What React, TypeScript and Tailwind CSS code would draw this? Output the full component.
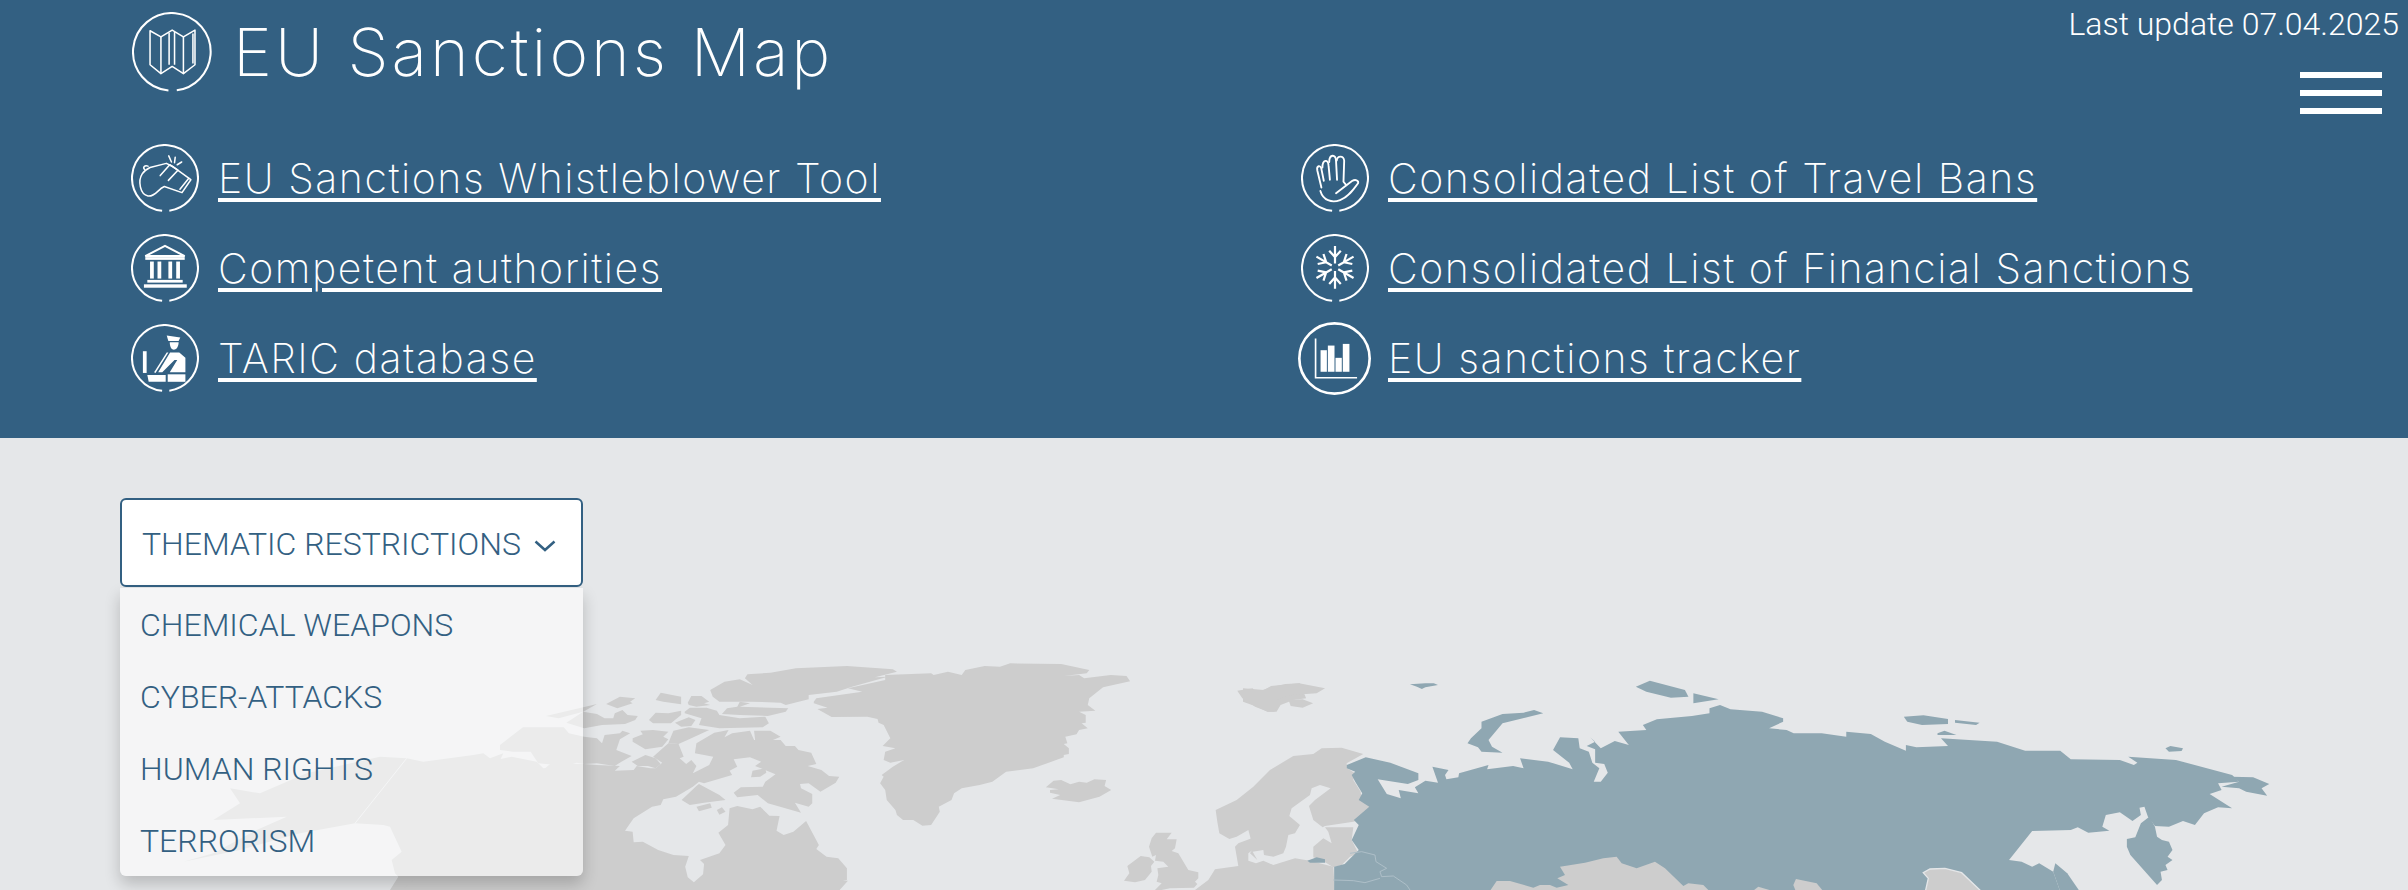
import React from "react";

const Ring = ({ cx, cy, r, w = 6 }: { cx: number; cy: number; r: number; w?: number }) => (
  <circle cx={cx} cy={cy} r={r} fill="none" stroke="white" strokeWidth={w} pathLength={100} strokeDasharray="96.5 3.5" transform={`rotate(95 ${cx} ${cy})`} />
);

const MapIcon = () => (
  <svg viewBox="25 25 235 235" className="w-[80px] h-[80px] shrink-0">
    <Ring cx={142} cy={142} r={114} />
    <g fill="none" stroke="white" strokeWidth={4.5} strokeLinejoin="round">
      <path d="M78 80 L110 98 L143 78 L176 98 L210 78 V180 L176 206 L143 185 L110 206 L78 180 Z" />
      <path d="M110 98 V206 M134 86 V180 M150 84 V180 M176 98 V206 M204 88 V176" />
    </g>
  </svg>
);

const Whistle = () => (
  <svg viewBox="22 17 200 200" className="w-[68px] h-[68px] shrink-0">
    <Ring cx={122} cy={117} r={97} />
    <g fill="none" stroke="white" strokeWidth={4.5} strokeLinejoin="round" strokeLinecap="round">
      <path d="M78 86 L126 74 L146 84 L198 122 L172 160 L120 142 C100 150 95 172 72 170 C48 165 42 125 55 105 C60 97 68 91 78 86 Z" />
      <path d="M108 110 L136 78 L160 94 L132 124 M166 150 L192 118" />
      <path d="M62 92 C56 86 62 78 72 82" />
      <path d="M133 52 L141 70 M152 56 L150 72 M171 70 L158 78" />
    </g>
  </svg>
);

const Bank = () => (
  <svg viewBox="22 287 200 200" className="w-[68px] h-[68px] shrink-0">
    <Ring cx={122} cy={387} r={97} />
    <path d="M122 322 L180 352 H64 Z" fill="none" stroke="white" strokeWidth={6} />
    <g fill="white">
      <rect x="64" y="355" width="116" height="8" />
      <rect x="78" y="368" width="11" height="50" />
      <rect x="100" y="368" width="11" height="50" />
      <rect x="132" y="368" width="11" height="50" />
      <rect x="155" y="368" width="11" height="50" />
      <rect x="70" y="422" width="104" height="8" />
      <rect x="60" y="435" width="126" height="10" />
    </g>
  </svg>
);

const Officer = () => (
  <svg viewBox="20 556 200 200" className="w-[68px] h-[68px] shrink-0">
    <Ring cx={120} cy={656} r={97} />
    <g fill="white">
      <path d="M125 590 L165 596 L160 606 L130 606 Z" />
      <path d="M134 610 H160 C160 625 152 632 146 632 C140 632 134 625 134 610 Z" />
      <path d="M55 636 H66 V700 H55 Z" />
      <path d="M125 640 L130 640 L92 700 L88 698 Z" />
      <path d="M135 640 L162 640 L180 655 V698 H134 L156 662 H148 L112 698 H100 Z" />
      <path d="M68 706 H122 V726 H72 Z" />
      <path d="M128 704 H180 V726 H128 Z" />
    </g>
  </svg>
);

const Hand = () => (
  <svg viewBox="35 17 200 200" className="w-[68px] h-[68px] shrink-0">
    <Ring cx={135} cy={117} r={97} />
    <g fill="none" stroke="white" strokeWidth={5.5} strokeLinecap="round" strokeLinejoin="round" transform="translate(0 -270)">
      <path d="M92 425 C100 452 125 462 150 452 C175 442 190 420 203 402 C205 394 195 390 185 396 L138 432" />
      <path d="M95 415 L83 365 C80 350 92 348 95 360 L102 395" />
      <path d="M98 356 C98 333 115 330 116 350 L120 392" />
      <path d="M118 340 C118 316 138 316 138 336 L141 392" />
      <path d="M140 336 C142 320 160 320 162 336 L160 398 L168 408" />
    </g>
  </svg>
);

const Snow = () => (
  <svg viewBox="35 287 200 200" className="w-[68px] h-[68px] shrink-0">
    <Ring cx={135} cy={387} r={97} />
    <g fill="none" stroke="white" strokeWidth={6.5}>
      {[0, 60, 120, 180, 240, 300].map((a) => (
        <g key={a} transform={`rotate(${a} 135 385)`}>
          <path d="M135 374 V322 M118 336 L135 355 L152 336" />
        </g>
      ))}
    </g>
  </svg>
);

const Chart = () => (
  <svg viewBox="25 547 220 220" className="w-[73px] h-[73px] shrink-0 -ml-[3px]">
    <circle cx="135" cy="657" r="106" fill="none" stroke="white" strokeWidth={8} />
    <path d="M78 597 V715 H203" fill="none" stroke="white" strokeWidth={5} />
    <g fill="white">
      <rect x="93" y="632" width="19" height="65" />
      <rect x="115" y="618" width="20" height="79" />
      <rect x="138" y="655" width="19" height="42" />
      <rect x="160" y="613" width="20" height="84" />
    </g>
  </svg>
);

const LinkRow = ({ icon, text }: { icon: React.ReactNode; text: string }) => (
  <div className="flex items-center h-[90px]">
    <div className="w-[87px] flex items-center shrink-0">{icon}</div>
    <a className="text-[41px] leading-[50px] text-white underline decoration-[4px] underline-offset-[5px] tracking-[1.55px] font-['Inter'] font-extralight">{text}</a>
  </div>
);

const WorldMap = () => (
  <svg viewBox="0 438 2408 452" className="absolute inset-0 w-[2408px] h-[452px]">
    <g className="fill-[#cdcdcd]">
      {/* west of North America */}
      <g transform="translate(380 660) scale(.3333)">
        <polygon points="-500,480 -420,430 -450,385 -360,400 -220,340 0,290 80,295 130,305 280,285 310,280 330,295 370,280 362,297 395,290 470,305 490,325 600,322 600,720 30,720 30,690 55,650 45,640 35,600 65,575 30,500 10,495 -75,490 -240,520 -420,570 -590,605 -500,580 -370,510 -280,470" />
        <path d="M-75 490 L80 295" fill="none" stroke="#e5e7e9" strokeWidth={3} />
      </g>
      <g transform="translate(500 640) scale(.5102 .3333)">
        <polygon points="100,370 165,372 190,375 235,378 225,392 262,390 268,378 295,385 305,385 318,368 300,350 330,310 350,312 360,350 352,355 365,372 375,360 385,378 378,400 410,375 418,350 382,340 385,310 420,278 448,270 440,292 455,280 490,272 498,300 515,300 550,300 560,318 578,318 585,330 610,338 620,372 603,378 630,390 645,408 665,410 658,428 628,455 605,430 588,432 590,445 612,462 612,490 605,500 578,488 590,518 525,490 505,465 465,472 458,458 472,442 515,440 520,425 540,403 500,378 512,365 490,352 458,358 465,380 450,392 455,405 400,430 390,425 378,440 345,470 320,478 315,495 298,500 262,535 245,572 260,575 262,607 280,605 310,630 340,645 370,648 363,680 368,712 380,727 398,703 400,672 392,660 430,640 442,615 428,578 447,555 450,505 465,498 495,508 510,500 528,527 548,528 542,572 556,585 575,575 600,543 625,615 620,627 640,650 663,655 680,685 680,720 672,722 682,722 660,760 -200,760" />
        <polygon points="492,412 495,392 520,385 522,398 510,410" />
        <polygon points="390,432 430,465 442,480 400,488 372,495 356,480 385,438" />
        <polygon points="385,500 412,490 415,503 390,514" />
        <polygon points="425,510 435,502 442,515 430,524" />
        <polygon points="208,192 235,170 265,175 255,185 260,190 230,205" />
        <polygon points="305,180 315,158 355,170 355,193 320,185" />
        <polygon points="368,188 375,168 395,168 410,185 400,190 412,195 385,200 370,195" />
        <polygon points="292,240 305,218 330,220 355,212 355,225 335,250 300,250" />
        <polygon points="343,248 370,232 383,240 375,258 355,260" />
        <polygon points="362,215 372,203 405,203 425,212 430,225 470,235 520,230 527,250 515,262 430,265 390,255 395,235 362,220" />
        <polygon points="412,150 440,125 470,118 495,135 480,115 485,103 530,98 580,85 680,78 770,88 778,95 735,112 760,110 690,140 660,155 605,165 605,178 560,195 550,188 490,185 465,185 430,185 417,170" />
        <polygon points="435,222 445,205 465,200 470,185 490,190 470,200 565,205 560,215 525,228 470,225" />
        <polygon points="90,228 190,192 163,215 115,235" />
        <polygon points="130,248 163,215 190,222 205,235 222,235 225,220 240,210 250,225 270,228 265,240 245,252 200,255 165,265" />
        <polygon points="0,315 45,262 125,262 135,280 165,290 190,295 200,310 205,285 235,280 240,272 255,280 235,298 228,330 258,348 238,365 225,378 190,370 165,372 150,368 130,378 75,370 60,335 25,335 0,330" />
        <polygon points="260,295 280,283 275,272 300,270 330,275 320,290 330,298 318,320 285,328 260,305" />
        <polygon points="258,365 285,345 305,355 315,372 305,385 290,378 270,378" />
        <polygon points="335,290 340,272 370,262 410,270 375,295 350,312 330,310" />
        <polygon points="498,272 530,272 550,290 535,300 500,300" />
        {/* Greenland */}
        <polygon points="615,185 620,175 710,155 682,145 755,120 755,105 845,100 850,105 878,95 905,105 912,90 950,78 980,80 1000,70 1100,72 1155,90 1150,100 1105,108 1135,105 1145,115 1197,105 1228,108 1235,124 1182,142 1155,175 1152,195 1167,212 1135,215 1148,225 1148,248 1140,250 1152,265 1135,270 1130,283 1108,290 1112,310 1105,312 1115,325 1115,342 1105,345 1105,352 1045,385 992,395 965,425 940,435 905,445 890,460 885,480 860,500 862,515 845,555 828,557 810,540 790,540 778,525 775,510 758,480 755,450 745,430 752,410 748,405 770,380 792,360 765,368 752,360 755,335 775,325 750,318 765,295 752,255 742,248 740,237 720,230 650,231 622,207 642,203 615,190" />
        {/* Iceland */}
        <polygon points="1070,442 1085,422 1100,420 1118,433 1135,425 1150,428 1165,418 1188,420 1185,438 1198,450 1175,470 1135,487 1082,476 1098,465 1078,458 1078,450 1095,448" />
        {/* Svalbard west */}
        <polygon points="1445,152 1475,145 1480,152 1495,150 1510,142 1540,132 1568,130 1580,175 1555,180 1530,195 1522,215 1505,215 1480,200 1455,175" />
      </g>
      <g transform="translate(1250 640) scale(.7015 .3333)">
        <polygon points="-10,145 20,150 30,138 70,130 107,145 95,160 60,165 40,178 35,215 25,215 10,200 -10,185" />
        <polygon points="55,180 75,178 90,190 75,203 58,198" />
      </g>
      {/* Europe */}
      <g transform="translate(1120 740) scale(.3333)">
        <polygon points="22,378 62,348 88,352 103,365 93,378 95,395 75,420 45,427 12,422 28,400" />
        <polygon points="108,345 97,350 87,320 95,295 108,278 155,278 140,298 170,298 165,325 155,333 175,340 205,390 235,397 235,415 225,425 232,432 222,443 150,445 100,455 125,430 110,425 115,405 112,385 145,380 130,365 105,362" />
        <polygon points="225,455 225,450 265,420 285,388 355,378 345,320 355,310 395,295 405,325 385,340 385,362 408,370 430,362 460,375 525,355 570,362 640,380 645,455" />
        <polygon points="287,210 350,180 400,140 450,90 520,48 580,42 605,25 665,23 730,42 680,70 682,85 705,100 700,120 722,155 725,180 750,198 718,240 700,245 615,258 608,262 580,240 567,198 585,180 632,145 600,135 575,145 570,165 515,205 508,228 540,255 525,280 505,285 498,320 490,340 460,350 432,345 430,330 398,335 412,360 390,340 400,325 385,270 350,290 328,297 298,280 292,245" />
        <polygon points="580,320 610,295 635,310 625,275 615,262 700,262 695,300 715,340 690,350 665,375 640,382 618,368 580,352" />
      </g>
    </g>
    <g className="fill-[#8fa7b2]">
      <g transform="translate(1250 640) scale(.7015 .3333)">
        <polygon points="138,375 165,352 200,368 240,400 240,420 225,432 182,418 195,462 215,475 212,450 240,460 235,442 250,422 268,428 260,380 283,390 278,405 280,418 297,412 298,400 340,375 338,388 375,378 390,385 385,355 425,365 460,388 455,368 432,330 442,292 468,295 470,325 483,335 488,368 498,385 490,425 500,425 510,398 505,372 492,368 492,328 480,318 492,305 485,292 500,325 520,303 540,315 525,275 565,270 560,255 580,238 630,228 655,220 655,205 670,195 685,208 730,215 760,235 760,245 740,265 765,270 775,280 815,280 850,290 850,275 885,282 905,305 935,332 935,315 950,322 995,318 985,295 1065,305 1105,332 1155,332 1170,358 1240,360 1260,375 1265,368 1252,350 1320,360 1400,405 1410,425 1380,430 1385,450 1368,462 1400,505 1380,502 1360,520 1347,555 1330,543 1310,560 1290,558 1280,530 1275,500 1268,503 1270,525 1258,543 1240,517 1220,525 1215,560 1225,572 1195,578 1180,562 1170,570 1115,573 1082,660 1100,665 1115,680 1125,670 1145,695 1155,755 120,755 120,680 135,672 155,630 145,600 155,555 148,540 170,500 155,480 160,460 150,425 145,405 150,395 138,385" />
        <polygon points="310,310 315,295 330,265 330,245 360,222 390,218 405,210 418,220 360,250 340,300 345,320 360,338 330,335 325,322" />
        <polygon points="228,133 250,130 262,130 268,135 250,142 245,147 238,140" />
        <polygon points="550,140 570,122 620,150 625,170 600,173 565,155" />
        <polygon points="632,160 668,178 632,190" />
        <polygon points="932,230 960,226 995,237 995,252 958,255 937,245" />
        <polygon points="1005,240 1040,248 1035,255 1005,248" />
        <polygon points="980,280 990,272 1007,285 980,285" />
        <polygon points="1305,325 1312,318 1330,325 1328,333 1310,335" />
        <polygon points="1400,410 1430,412 1453,432 1442,445 1450,467 1420,455 1410,445 1385,440 1410,425" />
        <polygon points="1148,670 1165,700 1183,755 1155,755 1145,695" />
        <polygon points="1290,560 1293,590 1300,600 1310,605 1315,630 1308,650 1315,660 1305,675 1308,690 1298,695 1300,720 1293,735 1255,645 1250,620 1250,597 1262,592 1270,550 1282,530" />
      </g>
      <g transform="translate(1120 740) scale(.3333)">
        <polygon points="562,362 590,352 615,358 615,368 570,368" />
        <path d="M690 340 L725 335 L765 345 L768 365 L800 385 L780 395 L785 410 L820 408 L860 435 L870 450 M640 420 L700 422 L735 428 L780 415" fill="none" stroke="#aebfc8" strokeWidth={3} />
      </g>
    </g>
    {/* Asia south of Russia */}
    <g className="fill-[#cdcdcd]" transform="translate(1500 800) scale(.3333)">
      <polygon points="-35,280 -10,243 30,243 100,263 120,255 150,255 170,263 205,255 172,235 195,225 180,200 255,188 310,175 350,170 365,190 410,205 465,185 495,205 550,258 565,250 610,255 635,280" />
      <polygon points="750,280 775,260 815,272 825,280" />
      <polygon points="888,237 950,250 975,280 890,280 880,255" />
      <polygon points="1275,280 1285,235 1270,218 1290,207 1335,205 1385,218 1450,280" stroke="#e5e7e9" strokeWidth={4} />
    </g>
  </svg>
);

export default function App() {
  return (
    <div className="w-[2408px] h-[890px] overflow-hidden bg-[#e5e7e9] font-['Roboto']">
      <header className="bg-[#336082] h-[438px]">
        <div className="h-[133px] flex justify-between items-start pl-[132px] pr-[9px]">
          <div className="flex items-center gap-[21px] mt-[12px]">
            <MapIcon />
            <h1 className="text-[66px] leading-[80px] text-white font-['Inter'] font-extralight tracking-[3px]">EU Sanctions Map</h1>
          </div>
          <div className="flex flex-col items-end">
            <div className="mt-[6px] text-[32px] leading-[36px] text-white font-light">Last update 07.04.2025</div>
            <div className="mt-[30px] mr-[17px] w-[82px] flex flex-col gap-[12px]">
              <span className="block h-[6px] bg-white" />
              <span className="block h-[6px] bg-white" />
              <span className="block h-[6px] bg-white" />
            </div>
          </div>
        </div>
        <div className="grid grid-cols-[1170px_1fr] pl-[131px]">
          <LinkRow icon={<Whistle />} text="EU Sanctions Whistleblower Tool" />
          <LinkRow icon={<Hand />} text="Consolidated List of Travel Bans" />
          <LinkRow icon={<Bank />} text="Competent authorities" />
          <LinkRow icon={<Snow />} text="Consolidated List of Financial Sanctions" />
          <LinkRow icon={<Officer />} text="TARIC database" />
          <LinkRow icon={<Chart />} text="EU sanctions tracker" />
        </div>
      </header>
      <main className="relative h-[452px] pt-[60px] pl-[120px]">
        <WorldMap />
        <div className="relative w-[463px]">
          <button className="w-full h-[89px] bg-white border-2 border-[#336082] rounded-[6px] flex items-center pl-[20px] pt-[3px] gap-[13px] text-[32px] font-light text-[#336082] whitespace-nowrap">
            THEMATIC RESTRICTIONS
            <svg viewBox="0 0 22 12" className="w-[22px] h-[12px] shrink-0 mt-[3px]">
              <path d="M1.5 1.5 L11 10 L20.5 1.5" fill="none" stroke="#336082" strokeWidth="2.5" />
            </svg>
          </button>
          <div className="absolute top-full mt-[1px] left-0 w-full h-[288px] bg-white/60 rounded-b-[6px] shadow-[0_8px_16px_0_rgba(0,0,0,0.2)]">
            {["CHEMICAL WEAPONS", "CYBER-ATTACKS", "HUMAN RIGHTS", "TERRORISM"].map((t) => (
              <div key={t} className="h-[72px] flex items-center pl-[20px] pt-[2px] text-[32px] font-light text-[#336082]">{t}</div>
            ))}
          </div>
        </div>
      </main>
    </div>
  );
}
